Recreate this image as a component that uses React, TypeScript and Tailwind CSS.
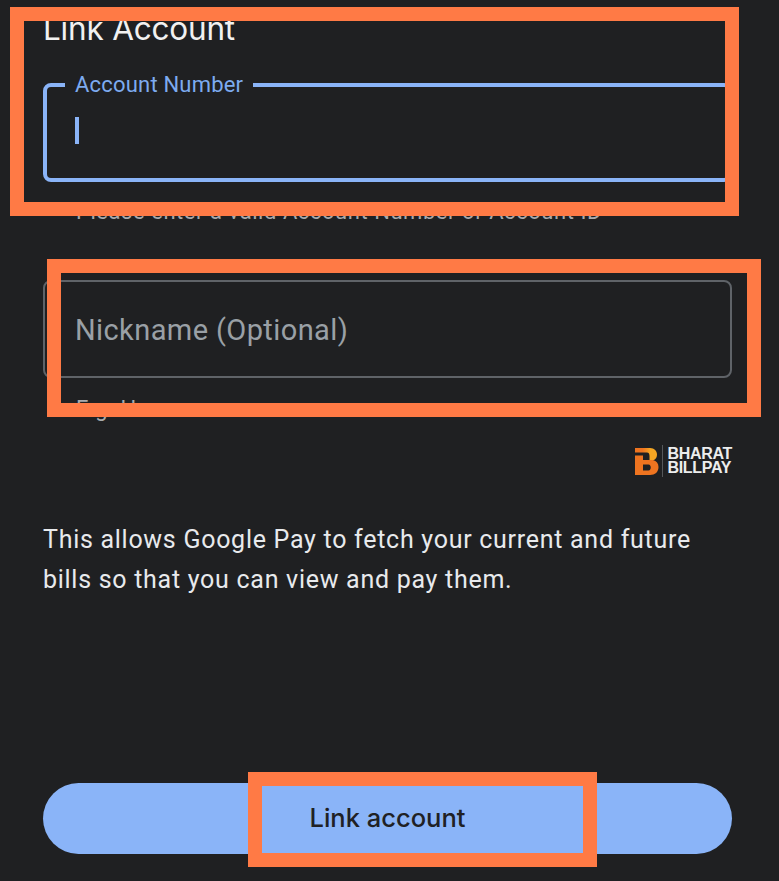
import React from "react";

function Frame({ cls }: { cls: string }) {
  return <div className={`absolute border-[14px] border-[#ff7a45] ${cls}`} />;
}

export default function App() {
  return (
    <div className="relative w-[779px] h-[881px] overflow-hidden bg-[#1f2022] flex flex-col pl-[43px] pr-[47px] font-['Roboto',sans-serif]">
      <h1 className="mt-[7px] h-[44px] font-['Inter',sans-serif] text-[31.5px] leading-[44px] font-normal text-[#f1f1f1] tracking-[-0.2px]">
        Link Account
      </h1>

      <div className="relative mt-[32px] h-[99px] rounded-[8px] border-[4px] border-[#8ab4f8] flex items-center pl-[28px] pb-[5px]">
        <span className="absolute -top-[14px] left-[18px] bg-[#1f2022] px-[10px] text-[22px] leading-[24px] text-[#7dabf0] tracking-[0.2px]">
          Account Number
        </span>
        <span className="block w-[4px] h-[27px] bg-[#8ab4f8]" />
      </div>
      <p className="mt-[18px] pl-[33px] h-[24px] text-[22px] leading-[24px] text-[#a8aaad] tracking-[0.55px] whitespace-nowrap">
        Please enter a valid Account Number or Account ID
      </p>

      <div className="mt-[56px] h-[98px] rounded-[8px] border-[2px] border-[#5f6368] flex items-center pl-[30px] pt-[2px]">
        <span className="text-[29px] leading-[36px] text-[#9aa0a6] tracking-[0.4px]">Nickname (Optional)</span>
      </div>
      <p className="mt-[19px] pl-[33px] h-[24px] text-[22px] leading-[24px] text-[#a8aaad] tracking-[0.5px]">E.g. Home</p>

      <div className="mt-[24px] flex justify-end items-center h-[32px]">
        <svg width="24" height="27" viewBox="0 0 24 27" className="shrink-0">
          <defs>
            <linearGradient id="bbpsTop" x1="0" y1="0" x2="1" y2="0">
              <stop offset="0.35" stopColor="#ee7420" />
              <stop offset="0.7" stopColor="#f5a623" />
            </linearGradient>
          </defs>
          <path d="M0 0H15C19.5 0 22 3 22 6.5C22 9 21 11 19 12H14.5V8C14.5 5.5 13.5 4.5 12 4.5H0Z" fill="url(#bbpsTop)" />
          <path d="M0 7.5H8V12H18C21.5 13 23.5 15.5 23.5 19C23.5 24 20 27 15 27H0ZM8 16.5V22.5H13.5C16.5 22.5 16.5 16.5 13.5 16.5Z" fill="#ee7420" />
        </svg>
        <div className="ml-[3px] mr-[4px] w-px h-[32px] bg-[#55575a]" />
        <div className="font-['Liberation_Sans',sans-serif] font-bold text-[16px] leading-[14px] text-[#eceded] tracking-[-0.3px]">
          <div>BHARAT</div>
          <div>BILLPAY</div>
        </div>
      </div>

      <p className="mt-[43px] text-[25px] leading-[40px] text-[#e8eaed] tracking-[0.72px]">
        This allows Google Pay to fetch your current and future bills so that you can view and pay them.
      </p>

      <button className="mt-[183px] h-[71px] w-[689px] rounded-[36px] bg-[#8ab4f8] flex items-center justify-center font-['Inter',sans-serif] text-[25.5px] font-medium text-[#202124]">
        Link account
      </button>

      <Frame cls="left-[10px] top-[7px] w-[729px] h-[209px]" />
      <Frame cls="left-[47px] top-[259px] w-[714px] h-[158px]" />
      <Frame cls="left-[248px] top-[772px] w-[349px] h-[95px]" />
    </div>
  );
}
